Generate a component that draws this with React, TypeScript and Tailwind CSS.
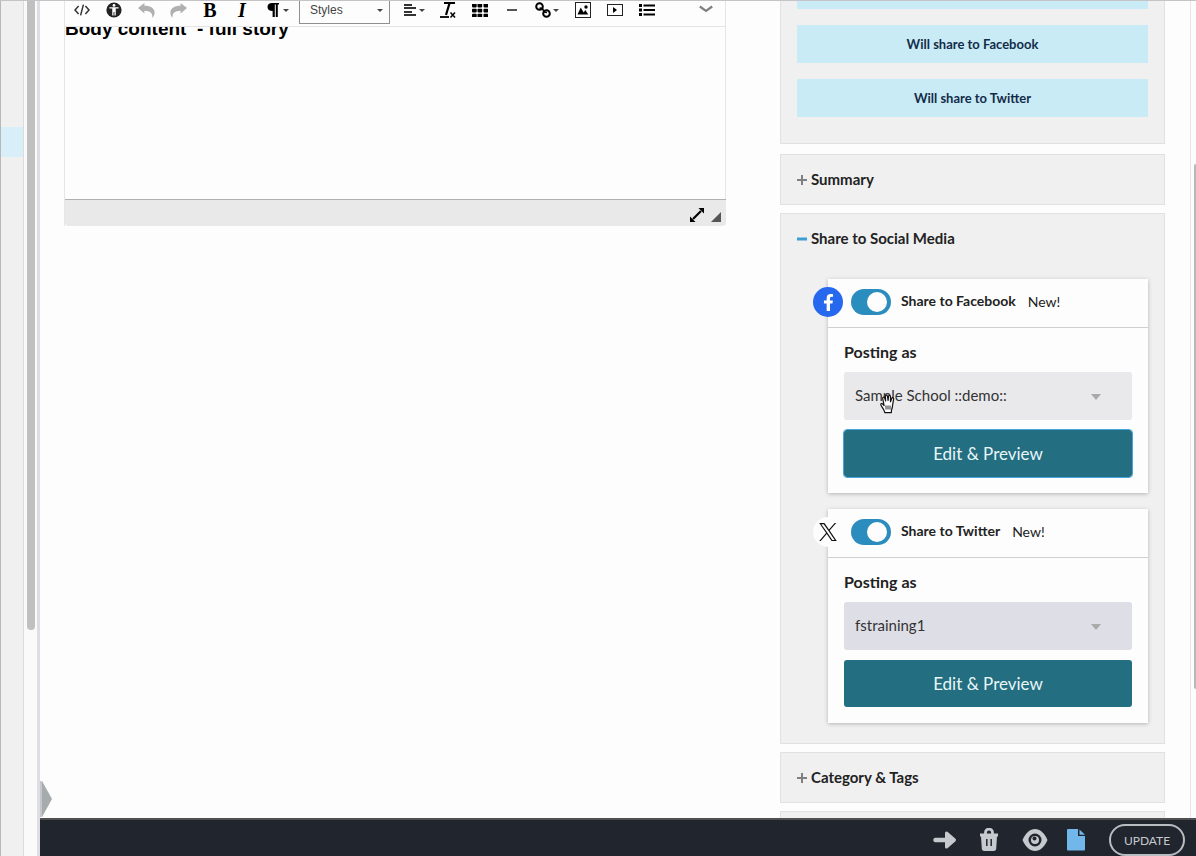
import React, { useState } from 'react';
import { FaFacebookF } from 'react-icons/fa';

interface ToolButtonProps {
  label: string;
  children: React.ReactNode;
}

function ToolButton({ label, children }: ToolButtonProps) {
  return (
    <button
      type="button"
      aria-label={label}
      className="flex h-7 w-8 shrink-0 items-center justify-center gap-0.5 text-black"
    >
      {children}
    </button>
  );
}

function Caret() {
  return (
    <svg width="6" height="3" viewBox="0 0 6 3" className="shrink-0" aria-hidden="true">
      <path d="M0 0h6L3 3z" fill="#444" />
    </svg>
  );
}

function Toolbar() {
  return (
    <div
      role="toolbar"
      aria-label="Editor toolbar"
      className="flex h-[26px] items-end overflow-hidden border-r border-b border-[#e4e4e4] pb-0.5 pl-px"
    >
      <ToolButton label="Source">
        <svg width="16" height="12" viewBox="0 0 16 12" fill="none" stroke="#333" strokeWidth="1.5">
          <path d="M4.6 2L1 6l3.6 4M11.4 2L15 6l-3.6 4M9.4 .6L6.6 11.4" />
        </svg>
      </ToolButton>
      <ToolButton label="Accessibility checker">
        <svg width="16" height="16" viewBox="0 0 16 16">
          <circle cx="8" cy="8" r="7.6" fill="#222" />
          <circle cx="8" cy="3.4" r="1.4" fill="#fff" />
          <path d="M3.4 5.8h9.2M8 6v4M6.9 6v7.4M9.1 6v7.4" stroke="#fff" strokeWidth="1.3" />
        </svg>
      </ToolButton>
      <ToolButton label="Undo">
        <svg width="17" height="15" viewBox="0 0 16 14" fill="#b0b0b0">
          <path d="M0 4.600L6 0v2.500c6 0 10 2.500 9.600 7-.2 2-1 3.300-2.100 4.300C14 10 12 7.500 6 7.300v2.500z" />
        </svg>
      </ToolButton>
      <ToolButton label="Redo">
        <svg width="17" height="15" viewBox="0 0 16 14" fill="#b0b0b0">
          <path d="M16 4.600L10 0v2.500c-6 0-10 2.500-9.600 7 .2 2 1 3.300 2.100 4.300C2 10 4 7.500 10 7.300v2.500z" />
        </svg>
      </ToolButton>
      <ToolButton label="Bold">
        <span className="font-['Liberation_Serif',serif] text-xl leading-4 font-bold">B</span>
      </ToolButton>
      <ToolButton label="Italic">
        <span className="font-['Liberation_Serif',serif] text-xl leading-4 font-bold italic">I</span>
      </ToolButton>
      <div className="flex w-[41px] shrink-0 pl-1">
        <ToolButton label="Paragraph format">
          <svg width="12" height="14" viewBox="0 0 12 14">
            <path d="M5 0h7v1.500h-1.200V14H8.800V1.500H7.800V14H5.600V8C2.400 8 .5 6.400.5 4S2.400 0 5 0z" />
          </svg>
          <span className="ml-0.5">
            <Caret />
          </span>
        </ToolButton>
      </div>
      <button
        type="button"
        className="flex h-7 w-[91px] shrink-0 items-center justify-between border border-[#8f8f8f] pr-1.5 pl-2.5 font-['Liberation_Sans',sans-serif] text-xs text-[#444]"
      >
        Styles
        <Caret />
      </button>
      <div className="flex shrink-0 pl-2">
        <ToolButton label="Align">
          <svg width="13" height="12" viewBox="0 0 13 12" fill="#333" shapeRendering="crispEdges">
            <path d="M0 0h8v2H0zM0 3h12v2H0zM0 7h8v2H0zM0 10h12v2H0z" />
          </svg>
          <Caret />
        </ToolButton>
        <div className="flex pl-0.5">
          <ToolButton label="Remove format">
            <svg width="16" height="16" viewBox="0 0 16 16" fill="none" stroke="#000">
              <path d="M4 1h11" strokeWidth="2" />
              <path d="M9.600 1L6 13" strokeWidth="2.200" />
              <path d="M0 15h9" strokeWidth="1.800" />
              <path d="M10.500 10.500l4.500 5M15 10.500l-4.500 5" strokeWidth="1.500" />
            </svg>
          </ToolButton>
        </div>
        <ToolButton label="Table">
          <svg width="16" height="13" viewBox="0 0 16 13">
            {[0, 5, 10].map((y) =>
              [0, 6, 12].map((x) => (
                <rect key={`${x}-${y}`} x={x === 0 ? 0 : x - 0.5} y={y - 0.3} width="4.700" height="3.700" rx="0.800" />
              ))
            )}
          </svg>
        </ToolButton>
        <ToolButton label="Horizontal line">
          <svg width="10" height="2" viewBox="0 0 10 2">
            <rect width="10" height="2" fill="#555" />
          </svg>
        </ToolButton>
        <div className="flex pl-[3px]">
          <ToolButton label="Link">
            <svg width="16" height="16" viewBox="0 0 16 16" fill="none" stroke="#000" strokeWidth="2">
              <circle cx="4.500" cy="4.500" r="3.300" />
              <circle cx="11.500" cy="11.500" r="3.300" />
              <path d="M4.500 6l3 .5 1.500 3.500 3 .5" strokeWidth="1.600" />
            </svg>
            <Caret />
          </ToolButton>
        </div>
        <div className="flex pl-1">
          <ToolButton label="Image">
            <svg width="16" height="16" viewBox="0 0 16 16">
              <rect x=".5" y=".5" width="15" height="15" fill="none" stroke="#222" />
              <path d="M2.500 12.500L5.700 5.500l3 5 1.600-2.500 3 4.500z" />
              <circle cx="11" cy="5" r="1.700" />
            </svg>
          </ToolButton>
        </div>
        <ToolButton label="Media">
          <svg width="16" height="12" viewBox="0 0 16 12">
            <rect x=".5" y=".5" width="15" height="11" fill="none" stroke="#222" />
            <path d="M6 3l4 3-4 3z" />
          </svg>
        </ToolButton>
        <ToolButton label="Bulleted list">
          <svg width="16" height="12" viewBox="0 0 16 12" stroke="#000" strokeWidth="2">
            <path d="M4.500 1.500H16M4.500 6H16M4.500 10.500H16" />
            <path d="M0 1.500h3M0 6h3M0 10.500h3" strokeWidth="3" />
          </svg>
        </ToolButton>
      </div>
      <div className="ml-auto flex pr-[3px] pb-px">
        <ToolButton label="More">
          <svg width="14" height="8" viewBox="0 0 14 8" fill="none" stroke="#808080" strokeWidth="2.200">
            <path d="M.8 1.500L7 6l6.200-4.500" />
          </svg>
        </ToolButton>
      </div>
    </div>
  );
}

function Editor() {
  return (
    <section className="flex min-w-0 flex-1 flex-col self-start border-l border-[#e6e6e6]">
      <Toolbar />
      <div className="h-[172px] overflow-hidden border-r border-[#e6e6e6]">
        <p className="-mt-2 font-['Liberation_Sans',sans-serif] text-[19px] leading-5 font-bold whitespace-pre text-black">
          {'Body content  - full story'}
        </p>
      </div>
      <div className="flex h-[27px] items-center justify-end gap-[7px] rounded-b-sm border-t border-[#b0b0b0] bg-[#e9e9e9] pt-1 pr-[5px]">
        <button type="button" aria-label="Maximize">
          <svg width="14" height="14" viewBox="0 0 14 14">
            <path d="M8.500 0H14v5.500zM0 8.500V14h5.500z" />
            <path d="M3 11l8-8" stroke="#000" strokeWidth="2.200" />
          </svg>
        </button>
        <svg width="10" height="10" viewBox="0 0 10 10" className="mt-1" aria-hidden="true">
          <path d="M10 0v10H0z" fill="#555" />
        </svg>
      </div>
    </section>
  );
}

function ShareNotice({ text }: { text: string }) {
  return (
    <div className="flex h-[38px] shrink-0 items-center justify-center bg-[#c9ebf5] pt-0.5 text-[13px] font-bold text-[#132b4a]">
      {text}
    </div>
  );
}

interface PanelProps {
  title: string;
  open?: boolean;
  children?: React.ReactNode;
}

function Panel({ title, open = false, children }: PanelProps) {
  return (
    <section className="shrink-0 border border-[#e1e1e5] bg-[#f0f0f0] px-4">
      <h2>
        <button
          type="button"
          aria-expanded={open}
          className="flex h-[49px] w-full items-center gap-1 text-left text-[15px] font-bold text-[#222]"
        >
          <svg width="10" height="10" viewBox="0 0 10 10" aria-hidden="true">
            {open ? (
              <path d="M0 5h10" stroke="#3e9fd0" strokeWidth="3" />
            ) : (
              <path d="M0 5h10M5 0v10" stroke="#808080" strokeWidth="2" />
            )}
          </svg>
          {title}
        </button>
      </h2>
      {children}
    </section>
  );
}

function XLogo() {
  return (
    <svg width="18" height="18" viewBox="0 0 24 24" fill="#111" aria-hidden="true">
      <path d="M14.234 10.162 22.977 0h-2.072l-7.591 8.824L7.251 0H.258l9.168 13.343L.258 24H2.330l8.016-9.318L16.749 24h6.993zm-2.837 3.299-.929-1.329L3.076 1.560h3.182l5.965 8.532.929 1.329 7.754 11.090h-3.182z" />
    </svg>
  );
}

function HandCursor() {
  return (
    <svg
      width="16"
      height="20"
      viewBox="0 0 16 20"
      className="pointer-events-none absolute top-[22px] left-9"
      aria-hidden="true"
    >
      <path
        d="M4.500 17.500C3.500 14.500 1.500 13 .8 10.700c-.3-1.200 1.300-1.600 2.300-.4l1 1.200L2.700 4.600c-.3-1.500 1.500-2 2-.6l1 3-.4-4.700c0-1.600 1.900-1.700 2.100-.2l.7 4.400.4-4c.2-1.500 2-1.300 2 .2v5l1.200-3.200c.6-1.300 2.200-.8 1.900.6l-.9 5.500c-.2 2.500-.6 4-1.200 5.500l-.2 2.600H4.800z"
        fill="#fff"
        stroke="#111"
        strokeWidth="1.200"
        strokeLinejoin="round"
      />
      <path d="M6 11.500v4M8 11.500v4M10 11.500v4" stroke="#111" strokeWidth=".9" />
    </svg>
  );
}

interface ShareCardProps {
  id: string;
  network: string;
  account: string;
  logo: React.ReactNode;
  logoClass: string;
  selectClass: string;
  buttonClass: string;
  cursor?: boolean;
}

function ShareCard({ id, network, account, logo, logoClass, selectClass, buttonClass, cursor }: ShareCardProps) {
  const [enabled, setEnabled] = useState(true);

  return (
    <div className="ml-[31px] bg-[#fdfdfd] shadow-[0_1px_4px_rgba(0,0,0,0.25)]">
      <div className="flex h-[49px] items-center border-b border-[#d0d0d0] pb-0.5">
        <span className={`-ml-[15px] flex size-[30px] items-center justify-center rounded-full ${logoClass}`}>
          {logo}
        </span>
        <input
          id={`${id}-toggle`}
          type="checkbox"
          role="switch"
          checked={enabled}
          onChange={(e) => setEnabled(e.target.checked)}
          className="ml-2 flex h-[26px] w-10 appearance-none items-center rounded-full bg-[#999] px-1 before:size-5 before:rounded-full before:bg-[#fdfdfd] checked:justify-end checked:bg-[#2b8cbe]"
        />
        <label htmlFor={`${id}-toggle`} className="ml-2.5 pb-0.5 text-sm leading-5 font-bold text-[#222]">
          Share to {network}
        </label>
        <span className="ml-3 text-sm leading-5 text-[#222]">New!</span>
      </div>
      <div className="flex flex-col px-4 pt-3 pb-4">
        <label htmlFor={`${id}-account`} className="mb-2 text-base leading-6 font-bold text-[#222]">
          Posting as
        </label>
        <div className="relative mb-2.5">
          <select
            id={`${id}-account`}
            defaultValue={account}
            className={`h-12 w-full appearance-none rounded-[3px] pr-12 pb-0.5 pl-[11px] text-[15px] text-[#333] ${selectClass}`}
          >
            <option>{account}</option>
          </select>
          <svg
            width="10"
            height="6"
            viewBox="0 0 10 6"
            className="pointer-events-none absolute top-[22px] right-[31px]"
            aria-hidden="true"
          >
            <path d="M0 0h10L5 6z" fill="#aaa" />
          </svg>
          {cursor && <HandCursor />}
        </div>
        <button
          type="button"
          className={`h-[47px] rounded-[3px] bg-[#236e80] text-[17px] text-[#e8f6f8] ${buttonClass}`}
        >
          Edit &amp; Preview
        </button>
      </div>
    </div>
  );
}

function Sidebar() {
  return (
    <aside className="flex w-[385px] shrink-0 flex-col gap-2 overflow-hidden">
      <section className="mb-0.5 flex shrink-0 flex-col gap-4 border-x border-b border-[#e1e1e5] bg-[#f0f0f0] px-4 pb-[26px]">
        <div className="h-2 bg-[#c9ebf5]" />
        <ShareNotice text="Will share to Facebook" />
        <ShareNotice text="Will share to Twitter" />
      </section>
      <Panel title="Summary" />
      <Panel title="Share to Social Media" open>
        <div className="flex flex-col gap-4 pt-4 pb-5">
          <ShareCard
            id="facebook"
            network="Facebook"
            account="Sample School ::demo::"
            logo={<FaFacebookF size={17} />}
            logoClass="bg-[#2668ee] text-white"
            selectClass="bg-[#e9e9ec]"
            buttonClass="outline outline-[#46a6dc]"
            cursor
          />
          <ShareCard
            id="twitter"
            network="Twitter"
            account="fstraining1"
            logo={<XLogo />}
            logoClass="bg-[#fdfdfd]"
            selectClass="bg-[#dedee7]"
            buttonClass=""
          />
        </div>
      </Panel>
      <Panel title="Category & Tags" />
      <Panel title="" />
    </aside>
  );
}

function ActionBar() {
  return (
    <footer className="flex h-[38px] shrink-0 items-start justify-end overflow-hidden border-t-2 border-[#505050] bg-[#21262e] pt-1 pr-[11px] text-[#c6c9ce]">
      <div className="flex h-8 items-center">
        <button type="button" aria-label="Move">
          <svg width="24" height="20" viewBox="0 0 24 20">
            <path d="M2.500 10H14" stroke="currentColor" strokeWidth="4.500" strokeLinecap="round" />
            <path
              d="M13.500 3l8 7-8 7z"
              fill="currentColor"
              stroke="currentColor"
              strokeWidth="3"
              strokeLinejoin="round"
            />
          </svg>
        </button>
        <button type="button" aria-label="Delete" className="ml-[22px]">
          <svg width="20" height="24" viewBox="0 0 20 24" fill="none">
            <path d="M1 7h18M6.500 6V4.500a3.500 3.500 0 0 1 7 0V6" stroke="currentColor" strokeWidth="2.800" />
            <path d="M2 8h16l-.8 13a2.500 2.500 0 0 1-2.400 2H5.200a2.500 2.500 0 0 1-2.400-2z" fill="currentColor" />
            <path d="M7.800 11v7M12.200 11v7" stroke="#21262e" strokeWidth="1.500" />
          </svg>
        </button>
        <button type="button" aria-label="Preview" className="ml-[23px]">
          <svg width="26" height="24" viewBox="0 0 26 24">
            <path d="M.5 12C4 4.500 8 1 13 1s9 3.500 12.500 11C22 19.500 18 23 13 23S4 19.500.5 12z" fill="currentColor" />
            <circle cx="13" cy="12" r="6.500" fill="#21262e" />
            <circle cx="13" cy="12" r="4" fill="currentColor" />
            <circle cx="12.500" cy="10.500" r="2" fill="#21262e" />
          </svg>
        </button>
        <button type="button" aria-label="Document" className="ml-[19px] text-[#72b7e9]">
          <svg width="18" height="22" viewBox="0 0 18 22" fill="currentColor">
            <path d="M1 0h10v7h7v13.500a1 1 0 0 1-1 1H1a1 1 0 0 1-1-1V1a1 1 0 0 1 1-1z" />
            <path d="M12.500 .5v5.200H18z" />
          </svg>
        </button>
        <button
          type="button"
          className="ml-6 h-8 w-[76px] rounded-full border-2 border-[#b9bcc0] pt-0.5 text-xs text-[#c6c9ce]"
        >
          UPDATE
        </button>
      </div>
    </footer>
  );
}

export default function App() {
  return (
    <div className="flex h-screen overflow-hidden border-t border-[#c4c4c6] bg-[#fdfdfd] font-[Lato,sans-serif]">
      <nav className="w-6 shrink-0 border-r border-l border-r-[#dcdcdc] border-l-[#b8b8b8] bg-[#f0f0f0] pt-[126px]">
        <div className="h-[30px] bg-[#d8effa]" />
      </nav>
      <div className="w-4 shrink-0 border-r-3 border-[#dddde4] bg-[#fafafa] pl-[3px]">
        <div className="h-[629px] w-2 rounded-b-full bg-[#c0c0c0]" />
      </div>
      <div className="relative flex min-w-0 flex-1 flex-col">
        <main className="flex min-h-0 flex-1 pl-6">
          <Editor />
          <div className="w-[54px] shrink-0" />
          <Sidebar />
          <div className="ml-[25px] flex w-1.5 shrink-0 justify-end border-l border-[#e6e6e6] pt-[163px]">
            <div className="h-[525px] w-0.5 rounded-l-full bg-[#b8b8b8]" />
          </div>
        </main>
        <button type="button" aria-label="Expand panel" className="absolute bottom-[39px] left-0">
          <svg width="12" height="36" viewBox="0 0 12 36">
            <path d="M0 0h2v36H0z" fill="#c6c6ca" />
            <path d="M2 0l10 18L2 36z" fill="#a6abad" />
          </svg>
        </button>
        <ActionBar />
      </div>
    </div>
  );
}
